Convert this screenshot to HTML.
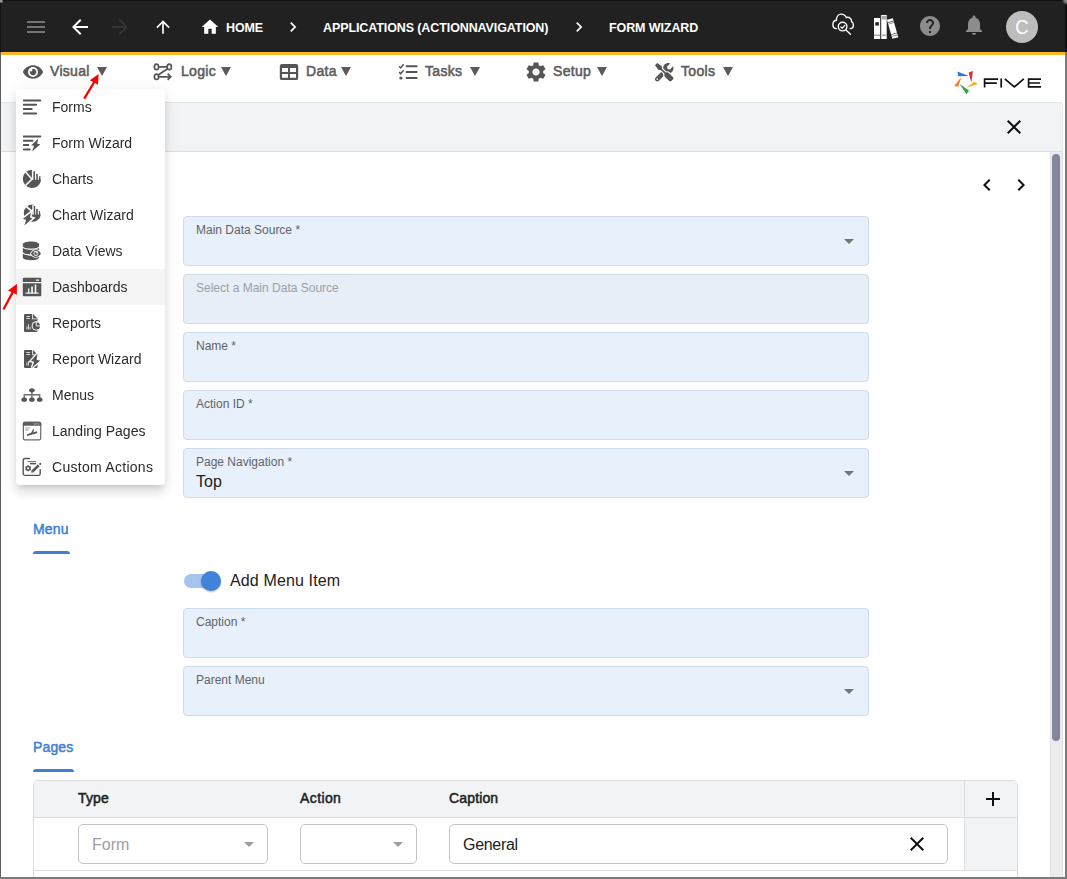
<!DOCTYPE html>
<html>
<head>
<meta charset="utf-8">
<title>Five - Form Wizard</title>
<style>
*{box-sizing:border-box;margin:0;padding:0}
html,body{width:1067px;height:879px;overflow:hidden;background:#fff;font-family:"Liberation Sans",sans-serif;}
#root{position:relative;width:1067px;height:879px;overflow:hidden;background:#fff}
.abs{position:absolute}
svg{display:block;position:absolute;overflow:visible}
.t{position:absolute;white-space:nowrap;line-height:1}
/* top bar */
#topbar{position:absolute;left:0;top:0;width:1067px;height:52px;background:#212121}
#ystripe{position:absolute;left:0;top:52px;width:1067px;height:3px;background:#f9b824}
.crumb{color:#fff;font-weight:bold;font-size:12.5px;top:22px;letter-spacing:-0.1px}
/* menubar */
.mi{color:#5c5c5c;font-size:14px;top:64px;letter-spacing:.3px;-webkit-text-stroke:.55px #5c5c5c}
.tri{position:absolute;width:0;height:0;border-left:5px solid transparent;border-right:5px solid transparent;border-top:9px solid #5a5a5a;top:67px}
/* content */
#chead{position:absolute;left:1px;top:102px;width:1062px;height:50px;background:#f2f3f5;border-top:1px solid #e3e4e6;border-bottom:1px solid #dcdddf;border-right:1px solid #e3e4e6;border-top-right-radius:4px}
.fld{position:absolute;left:183px;width:686px;height:50px;background:#e8f1fb;border:1px solid #ccdcec;border-radius:4px}
.fld.dis{background:#e7eef6;border-color:#cfdcea}
.lbl{position:absolute;left:12px;top:6px;font-size:12px;color:#5f6368;white-space:nowrap;line-height:14px}
.dis .lbl{color:#9aa0a6}
.val{position:absolute;left:12px;top:24px;font-size:16px;color:#212121;line-height:18px}
.dd{position:absolute;width:0;height:0;border-left:5px solid transparent;border-right:5px solid transparent;border-top:5px solid #757575}
.tab{color:#3f7fd6;font-size:14px;-webkit-text-stroke:.5px #3f7fd6;letter-spacing:.15px}
.ul{position:absolute;height:3px;background:#3f7fd6;border-radius:3px 3px 0 0}
/* dropdown */
#menu{position:absolute;left:16px;top:89px;width:149px;height:396px;background:#fff;border-radius:4px;box-shadow:0 5px 5px -3px rgba(0,0,0,.10),0 8px 10px 1px rgba(0,0,0,.08),0 3px 14px 2px rgba(0,0,0,.07);will-change:transform}
.it{position:absolute;left:0;width:149px;height:36px}
.it span{position:absolute;left:36px;top:10px;font-size:14px;color:#2b2b2b;white-space:nowrap;line-height:16px}
.it.hl{background:#f5f5f5}
.th{font-size:14px;color:#212121;top:791px;letter-spacing:.15px;-webkit-text-stroke:.5px #212121}
.inp{position:absolute;top:824px;height:40px;border:1px solid #c4c4c4;border-radius:5px;background:#fff}
</style>
</head>
<body>
<div id="root">

<!-- TOP BAR -->
<div id="topbar">
<svg style="left:24px;top:15px" width="24" height="24" viewBox="0 0 24 24"><path fill="#757575" d="M3 18h18v-2H3v2zm0-5h18v-2H3v2zm0-7v2h18V6H3z"/></svg>
<svg style="left:68px;top:15px" width="24" height="24" viewBox="0 0 24 24"><path fill="#fff" d="M20 11H7.83l5.59-5.59L12 4l-8 8 8 8 1.41-1.41L7.83 13H20v-2z"/></svg>
<svg style="left:108px;top:15px" width="24" height="24" viewBox="0 0 24 24"><path fill="#343434" d="M12 4l-1.41 1.41L16.17 11H4v2h12.17l-5.58 5.59L12 20l8-8z"/></svg>
<svg style="left:153px;top:17px" width="20" height="20" viewBox="0 0 24 24"><path fill="#fff" d="M4 12l1.41 1.41L11 7.830V20h2V7.830l5.580 5.590L20 12l-8-8-8 8z"/></svg>
<svg style="left:200px;top:17px" width="20" height="20" viewBox="0 0 24 24"><path fill="#fff" d="M10 20v-6h4v6h5v-8h3L12 3 2 12h3v8z"/></svg>
<div class="t crumb" style="left:226px">HOME</div>
<svg style="left:283px;top:17px" width="20" height="20" viewBox="0 0 24 24"><path fill="#fff" d="M10 6L8.590 7.410 13.170 12l-4.580 4.590L10 18l6-6z"/></svg>
<div class="t crumb" style="left:323px">APPLICATIONS (ACTIONNAVIGATION)</div>
<svg style="left:569.300px;top:17px" width="20" height="20" viewBox="0 0 24 24"><path fill="#fff" d="M10 6L8.590 7.410 13.170 12l-4.580 4.590L10 18l6-6z"/></svg>
<div class="t crumb" style="left:609px">FORM WIZARD</div>
<!-- right icons -->
<svg id="cloud" style="left:831px;top:12px" width="24" height="24" viewBox="0 0 24 24"><g fill="none" stroke="#fff" stroke-width="1.400" stroke-linecap="round"><path d="M5.400 16.600C3.200 16.400 1.900 14.600 1.900 12.400C1.900 10.200 3.400 8.600 5.400 8.300C5.400 4.800 7.400 2.100 10.200 2.100C12.600 2.100 14.400 3.400 15.300 5.500C18.200 4.700 20.800 6.800 20.600 9.600C21.800 10.300 22.400 11.700 22.400 13C22.400 15.200 20.800 16.600 19 16.600"/>
<circle cx="11.600" cy="14.600" r="5.600" fill="#212121" stroke="none"/><circle cx="11.600" cy="14.600" r="4.300"/><path d="M15 18L19.400 22.200"/><path stroke-width="1.200" d="M9.800 14.900L11.200 16.300L13.800 13.400"/></g></svg>
<svg id="books" style="left:872px;top:14px" width="27" height="26" viewBox="0 0 27 26"><path fill="#fff" d="M2 3.900H8.100V25.100H2ZM8.950 0.900H14.700V25.100H8.950Z"/>
<path fill="#212121" d="M3.300 8.200H6.850V11.600H3.300Z"/>
<path fill="#aaa" d="M2 20.600H8.100V22.100H2ZM8.950 20.600H14.700V22.100H8.950ZM9.900 2.100H14.700V5.600H9.900Z"/><path fill="#ccc" d="M8.950 0.900H9.900V25.100H8.950Z"/>
<g transform="rotate(-16 20.600 14.500)"><path fill="#fff" d="M17.500 4.600H23.700V24.400H17.500Z"/><path fill="#555" d="M17.500 7.100H23.700V8H17.500ZM17.500 8.900H23.700V9.500H17.500ZM17.500 19.600H23.700V20.400H17.500ZM17.500 21.600H23.700V22.300H17.500Z"/></g></svg>
<svg style="left:918px;top:13.500px" width="24" height="24" viewBox="0 0 24 24"><path fill="#8c8c8c" d="M12 2C6.480 2 2 6.480 2 12s4.480 10 10 10 10-4.480 10-10S17.520 2 12 2zm1 17h-2v-2h2v2zm2.070-7.750l-.9.920C13.450 12.900 13 13.500 13 15h-2v-.5c0-1.100.450-2.100 1.170-2.830l1.240-1.260c.370-.360.590-.860.590-1.410 0-1.100-.9-2-2-2s-2 .9-2 2H8c0-2.210 1.790-4 4-4s4 1.790 4 4c0 .880-.360 1.680-.930 2.250z"/></svg>
<svg style="left:962px;top:13px" width="24" height="24" viewBox="0 0 24 24"><path fill="#8c8c8c" d="M12 22c1.100 0 2-.9 2-2h-4c0 1.100.890 2 2 2zm6-6v-5c0-3.070-1.640-5.640-4.500-6.320V4c0-.830-.670-1.500-1.500-1.500s-1.500.670-1.500 1.500v.680C7.630 5.360 6 7.920 6 11v5l-2 2v1h16v-1l-2-2z"/></svg>
<div class="abs" style="left:1006px;top:11px;width:32px;height:32px;border-radius:50%;background:#bdbdbd"></div>
<div class="t" style="left:1006px;top:17px;width:32px;text-align:center;font-size:20px;color:#fff;transform:scaleX(.92)">C</div>
</div>
<div id="ystripe"></div>

<!-- MENU BAR -->
<div id="menubar">
<svg id="i-eye" style="left:23px;top:62px" width="20" height="20" viewBox="0 0 576 512"><path fill="#555" d="M572.52 241.400C518.290 135.590 410.930 64 288 64S57.680 135.640 3.480 241.410a32.350 32.350 0 0 0 0 29.190C57.710 376.410 165.070 448 288 448s230.320-71.640 284.520-177.410a32.350 32.350 0 0 0 0-29.190zM288 400a144 144 0 1 1 144-144 143.930 143.930 0 0 1-144 144zm0-240a95.310 95.310 0 0 0-25.310 3.790 47.850 47.850 0 0 1-66.900 66.900A95.780 95.780 0 1 0 288 160z"/></svg>
<div class="t mi" style="left:50px">Visual</div><div class="tri" style="left:97px"></div>
<svg id="i-logic" style="left:152px;top:59px" width="24" height="24" viewBox="0 0 24 24"><g fill="none" stroke="#555" stroke-width="1.700"><ellipse cx="4.500" cy="7.900" rx="2.100" ry="2.700"/><ellipse cx="17.300" cy="7.900" rx="2.100" ry="2.700"/><ellipse cx="4.500" cy="17.800" rx="2.100" ry="2.700"/>
<path d="M6.600 7.900H15.200M15.600 9.700L6.200 16M6.600 17.800H18.600M15.600 14.700L18.800 17.800L15.600 20.900"/></g></svg>
<div class="t mi" style="left:181px">Logic</div><div class="tri" style="left:221px"></div>
<svg id="i-data" style="left:277px;top:59px" width="24" height="24" viewBox="0 0 24 24"><rect x="2.800" y="4.900" width="18.400" height="16.200" rx="2.200" fill="#555"/><path fill="#fff" d="M5 8.900H11V12.900H5ZM13 8.900H19V12.900H13ZM5 14.900H11V18.800H5ZM13 14.900H19V18.800H13Z"/></svg>
<div class="t mi" style="left:306px">Data</div><div class="tri" style="left:341px"></div>
<svg id="i-tasks" style="left:397px;top:59px" width="24" height="24" viewBox="0 0 24 24"><g fill="none" stroke="#555"><path stroke-width="2" d="M8.800 7.200H20.400M8.800 13.100H20.400M8.800 19H20.400"/>
<path stroke-width="1.500" d="M2.100 7.200L3.600 8.900L6.700 5.300M2.100 13.100L3.600 14.800L6.700 11.200"/></g><circle cx="3.900" cy="19" r="1.600" fill="#555"/></svg>
<div class="t mi" style="left:425px">Tasks</div><div class="tri" style="left:470px"></div>
<svg id="i-setup" style="left:524px;top:60px" width="24" height="24" viewBox="0 0 24 24"><path fill="#555" d="M19.140 12.940c.040-.3.060-.610.060-.940 0-.320-.020-.640-.070-.940l2.030-1.580c.180-.140.230-.410.120-.610l-1.920-3.320c-.120-.220-.370-.290-.590-.220l-2.390.960c-.5-.380-1.030-.7-1.620-.940l-.360-2.540c-.040-.240-.240-.410-.480-.410h-3.840c-.240 0-.430.170-.470.410l-.360 2.540c-.590.240-1.130.570-1.620.940l-2.390-.960c-.220-.080-.470 0-.590.220L2.740 8.870c-.120.210-.080.470.12.610l2.030 1.580c-.050.3-.090.630-.090.940s.020.640.070.940l-2.030 1.580c-.180.140-.230.410-.120.610l1.920 3.320c.120.220.370.290.590.220l2.390-.960c.5.380 1.030.7 1.620.940l.360 2.540c.050.240.240.410.480.410h3.840c.240 0 .440-.170.470-.410l.360-2.540c.590-.240 1.130-.560 1.620-.940l2.390.960c.220.080.470 0 .590-.220l1.920-3.320c.120-.220.070-.470-.12-.610l-2.010-1.580zM12 15.600c-1.980 0-3.600-1.620-3.600-3.600s1.620-3.600 3.600-3.600 3.600 1.620 3.600 3.600-1.620 3.600-3.600 3.600z"/></svg>
<div class="t mi" style="left:553px">Setup</div><div class="tri" style="left:597px"></div>
<svg id="i-tools" style="left:654.800px;top:62.600px" width="18.500" height="18.500" viewBox="0 0 512 512"><path fill="#555" d="M501.100 395.700L384 278.600c-23.100-23.100-57.600-27.600-85.400-13.900L192 158.100V96L64 0 0 64l96 128h62.100l106.600 106.600c-13.600 27.800-9.200 62.300 13.900 85.400l117.100 117.100c14.600 14.600 38.200 14.600 52.700 0l52.700-52.700c14.500-14.600 14.500-38.200 0-52.700zM331.700 225c28.300 0 54.900 11 74.900 31l19.400 19.400c15.800-6.900 30.800-16.500 43.800-29.500 37.100-37.100 49.700-89.300 37.900-136.700-2.200-9-13.500-12.100-20.100-5.500l-74.400 74.400-67.900-11.300L334 98.900l74.400-74.400c6.600-6.600 3.400-17.900-5.700-20.200-47.400-11.700-99.600.9-136.600 37.900-28.500 28.500-41.900 66.100-41.200 103.600l82.100 82.100c8.100-1.900 16.500-2.900 24.700-2.900zm-103.900 82l-56.700-56.700L18.700 402.800c-25 25-25 65.500 0 90.500s65.500 25 90.500 0l123.600-123.600c-7.600-19.900-9.900-41.600-5-62.700zM64 472c-13.200 0-24-10.800-24-24 0-13.300 10.700-24 24-24s24 10.700 24 24c0 13.200-10.700 24-24 24z"/></svg>
<div class="t mi" style="left:681px">Tools</div><div class="tri" style="left:723px"></div>
<svg id="logo" style="left:945px;top:62px" width="105" height="40" viewBox="0 0 105 40">
<polygon fill="#2f76d6" points="12.400,9.600 23.800,14 13.200,14.200"/>
<polygon fill="#d9303b" points="23.600,10.400 28,9 26.300,20.400"/>
<polygon fill="#f9b320" points="33,22 29.400,19.800 21.300,25.800"/>
<polygon fill="#35a24b" points="14.600,22 24,28.600 21.500,32.200"/>
<polygon fill="#f8802a" points="16.300,15 13.300,24.700 9,24"/>
<g fill="none" stroke="#111" stroke-width="1.700">
<path d="M53.200,17.200H39.600V25.600M39.600,21.200H51.800"/>
<path d="M56.200,16.500V25.600"/>
<path d="M59.800,16.800L69.300,25L78.800,16.800"/>
<path d="M96,17.200H83.600V24.800H96M83.600,21H95"/>
</g>
</svg>
</div>

<!-- CONTENT HEADER -->
<div id="chead"></div>
<svg style="left:1002px;top:115px" width="24" height="24" viewBox="0 0 24 24"><path fill="#111" d="M19 6.410L17.590 5 12 10.590 6.410 5 5 6.410 10.590 12 5 17.590 6.410 19 12 13.410 17.590 19 19 17.590 13.410 12z"/></svg>

<!-- SCROLL AREA -->
<div id="scroll">
<div class="abs" style="left:1050px;top:152px;width:13px;height:725px;background:#ececec;border-left:1px solid #e2e2e2;border-right:1px solid #e2e2e2"></div>
<div class="abs" style="left:1052px;top:154px;width:8px;height:587px;background:#82879a;border-radius:4px"></div>
<svg style="left:975px;top:173px" width="24" height="24" viewBox="0 0 24 24"><path fill="#111" d="M15.410 7.410L14 6l-6 6 6 6 1.410-1.410L10.830 12z"/></svg>
<svg style="left:1009px;top:173px" width="24" height="24" viewBox="0 0 24 24"><path fill="#111" d="M10 6L8.590 7.410 13.170 12l-4.580 4.590L10 18l6-6z"/></svg>
<div class="fld" style="top:216px"><div class="lbl">Main Data Source *</div><div class="dd" style="left:660px;top:22px"></div></div>
<div class="fld dis" style="top:274px"><div class="lbl">Select a Main Data Source</div></div>
<div class="fld" style="top:332px"><div class="lbl">Name *</div></div>
<div class="fld" style="top:390px"><div class="lbl">Action ID *</div></div>
<div class="fld" style="top:448px"><div class="lbl">Page Navigation *</div><div class="val">Top</div><div class="dd" style="left:660px;top:22px"></div></div>
<div class="t tab" style="left:33px;top:522px">Menu</div><div class="ul" style="left:33px;top:551px;width:37px"></div>
<div class="abs" style="left:184px;top:574px;width:34px;height:14px;border-radius:7px;background:#a5c4ee"></div>
<div class="abs" style="left:201px;top:571px;width:20px;height:20px;border-radius:50%;background:#4183d8;box-shadow:0 1px 2px rgba(0,0,0,.3)"></div>
<div class="t" style="left:230px;top:573px;font-size:16px;color:#212121;letter-spacing:.13px">Add Menu Item</div>
<div class="fld" style="top:608px"><div class="lbl">Caption *</div></div>
<div class="fld" style="top:666px"><div class="lbl">Parent Menu</div><div class="dd" style="left:660px;top:22px"></div></div>
<div class="t tab" style="left:33px;top:740px">Pages</div><div class="ul" style="left:33px;top:769px;width:41px"></div>
<div class="abs" style="left:33px;top:780px;width:985px;height:110px;border:1px solid #dcdddf;border-radius:5px 5px 0 0;background:#fff"></div>
<div class="abs" style="left:34px;top:781px;width:983px;height:36px;background:#f2f3f5;border-radius:4px 4px 0 0"></div>
<div class="abs" style="left:34px;top:817px;width:983px;height:1px;background:#dcdddf"></div>
<div class="abs" style="left:34px;top:870px;width:983px;height:1px;background:#dcdddf"></div>
<div class="abs" style="left:964px;top:781px;width:53px;height:89px;background:#f2f3f5;border-left:1px solid #dcdddf"></div>
<div class="abs" style="left:964px;top:817px;width:53px;height:1px;background:#dcdddf"></div>
<div class="abs" style="left:964px;top:870px;width:53px;height:1px;background:#dcdddf"></div>
<div class="t th" style="left:78px">Type</div><div class="t th" style="left:300px;letter-spacing:.4px">Action</div><div class="t th" style="left:449px">Caption</div>
<svg style="left:981px;top:787px" width="24" height="24" viewBox="0 0 24 24"><path fill="#111" d="M19 13h-6v6h-2v-6H5v-2h6V5h2v6h6v2z"/></svg>
<div class="inp" style="left:78px;width:190px"><div class="t" style="left:13px;top:12px;font-size:16px;color:#9e9e9e">Form</div><div class="dd" style="left:165px;top:17px;border-top-color:#9e9e9e"></div></div>
<div class="inp" style="left:300px;width:117px"><div class="dd" style="left:92px;top:17px;border-top-color:#9e9e9e"></div></div>
<div class="inp" style="left:449px;width:499px"><div class="t" style="left:13px;top:12px;font-size:16px;color:#212121;letter-spacing:-.3px">General</div><svg style="left:455px;top:7px" width="24" height="24" viewBox="0 0 24 24"><path fill="#111" d="M19 6.410L17.590 5 12 10.590 6.410 5 5 6.410 10.590 12 5 17.590 6.410 19 12 13.410 17.590 19 19 17.590 13.410 12z"/></svg></div>
</div>

<!-- DROPDOWN -->
<div id="menu">
<div class="it" style="top:0px"><svg id="mi0" style="left:5px;top:6px" width="24" height="24" viewBox="0 0 24 24"><g stroke="#555" stroke-width="2" stroke-linecap="round"><path d="M2.8 5.400H19.300M2.800 9.700H15.100M2.800 14H10.700M2.800 18.400H15.100"/></g></svg><span>Forms</span></div>
<div class="it" style="top:36px"><svg id="mi1" style="left:5px;top:6px" width="24" height="24" viewBox="0 0 24 24"><g stroke="#555" stroke-width="2" stroke-linecap="round"><path d="M2.800 5.400H19.300M2.800 9.800H11.500M2.800 14.100H7.300M2.800 18.400H8.700"/></g><polygon fill="#555" stroke="#fff" stroke-width="1" paint-order="stroke" points="17.300,7.400 10.200,14.300 13,14.800 11.100,20.600 19.400,13.300 16.200,12.800"/></svg><span>Form Wizard</span></div>
<div class="it" style="top:72px"><svg id="mi2" style="left:5px;top:6px" width="24" height="24" viewBox="0 0 24 24"><path fill="#555" d="M10.950 11.850V2.650A9.200 9.200 0 1 0 20.150 12.850H10.950Z"/>
<path stroke="#fff" stroke-width="1.500" fill="none" d="M10.950 12.200L4.300 4.600M11.200 12L4.600 18.400"/>
<path fill="#fff" d="M10.950 2H12.300V12.600H10.950Z"/>
<path fill="#555" d="M12.400 4.200H14V13H12.400ZM15.200 7H16.800V13H15.200ZM17.900 9.200H19.500V13H17.900Z"/></svg><span>Charts</span></div>
<div class="it" style="top:108px"><svg id="mi3" style="left:5px;top:6px" width="24" height="24" viewBox="0 0 24 24"><path fill="#555" d="M11.300 10.200V1.600A8.600 8.600 0 1 0 19.900 11.400H11.300Z"/>
<path stroke="#fff" stroke-width="1.700" fill="none" d="M12.300 9.700L4.800 3"/>
<path fill="#d0d0d0" d="M11.300 1H12.900V11.400H11.300Z"/>
<path fill="#555" d="M12.900 3.100H14.200V12H12.900ZM15.100 5.900H16.800V12H15.100ZM17.900 7.900H19.100V12H17.900Z"/>
<polygon fill="#555" stroke="#fff" stroke-width="3" paint-order="stroke" stroke-linejoin="miter" points="10,9.400 1.900,15.900 5.200,16.700 3.400,22.500 11.600,15.200 8.900,14.500"/></svg><span>Chart Wizard</span></div>
<div class="it" style="top:144px"><svg id="mi4" style="left:5px;top:6px" width="24" height="24" viewBox="0 0 24 24"><path fill="#555" transform="translate(1.800 2.600) scale(.0364 .0365)" d="M448 73.143v45.714C448 159.143 347.667 192 224 192S0 159.143 0 118.857V73.143C0 32.857 100.333 0 224 0s224 32.857 224 73.143zM448 176v102.857C448 319.143 347.667 352 224 352S0 319.143 0 278.857V176c48.125 33.143 136.208 48.572 224 48.572S399.874 209.143 448 176zm0 160v102.857C448 479.143 347.667 512 224 512S0 479.143 0 438.857V336c48.125 33.143 136.208 48.572 224 48.572S399.874 369.143 448 336z"/>
<path fill="#555" stroke="#fff" stroke-width="1.600" paint-order="stroke" d="M9.900 14.500C11.100 12.300 12.900 11.100 14.900 11.100S18.700 12.300 19.900 14.500C18.700 16.700 16.900 17.900 14.900 17.900S11.100 16.700 9.900 14.500Z"/>
<circle cx="14.900" cy="14.500" r="2.400" fill="#fff"/><circle cx="14.900" cy="14.500" r="1.600" fill="#555"/><circle cx="15.500" cy="13.800" r=".6" fill="#fff"/></svg><span>Data Views</span></div>
<div class="it hl" style="top:180px"><svg id="mi5" style="left:5px;top:6px" width="24" height="24" viewBox="0 0 24 24"><path fill="#555" d="M2.800 2.800H19.300A1 1 0 0 1 20.300 3.800V6.900H1.800V3.800A1 1 0 0 1 2.800 2.800ZM1.800 8.300H20.300V20.200A1 1 0 0 1 19.300 21.200H2.800A1 1 0 0 1 1.800 20.200Z"/>
<path fill="#f5f5f5" d="M14.900 4.600H18.100V5.700H14.900ZM7 13.600H8.300V17.600H7ZM10.200 11.600H11.900V17.600H10.200ZM13.700 9.600H15.300V17.600H13.700ZM4.600 17.600H17.700V18.800H4.600Z"/></svg><span>Dashboards</span></div>
<div class="it" style="top:216px"><svg id="mi6" style="left:5px;top:6px" width="24" height="24" viewBox="0 0 24 24"><path fill="#555" d="M4.200 3H12.100L16.500 7.400V19.700A1.200 1.200 0 0 1 15.300 20.900H4.200A1.200 1.200 0 0 1 3 19.700V4.200A1.200 1.200 0 0 1 4.200 3Z"/>
<path fill="#fff" d="M12.100 3V7.400H16.500V8.300H11.200V3Z"/>
<path fill="#ddd" d="M5.400 4.900H8.900V5.900H5.400ZM5.400 6.900H8.900V7.900H5.400ZM5.400 15.400H6.400V18.500H5.400ZM7 13.300H8V18.500H7ZM8.600 16H9.600V18.500H8.600Z"/>
<circle cx="15.300" cy="14.900" r="4.700" fill="#fff"/><circle cx="15.300" cy="14.900" r="3.700" fill="#555"/>
<path stroke="#fff" stroke-width=".9" fill="none" d="M15.300 10.500V14.900H19.700"/></svg><span>Reports</span></div>
<div class="it" style="top:252px"><svg id="mi7" style="left:5px;top:6px" width="24" height="24" viewBox="0 0 24 24"><path fill="#555" d="M4.200 3H12.100L16.500 7.400V19.700A1.200 1.200 0 0 1 15.300 20.900H4.200A1.200 1.200 0 0 1 3 19.700V4.200A1.200 1.200 0 0 1 4.200 3Z"/>
<path fill="#fff" d="M12.100 3V7.400H16.500V8.300H11.200V3Z"/>
<path fill="#ddd" d="M5.400 4.900H8.900V5.900H5.400ZM5.400 6.900H8.900V7.900H5.400ZM5.400 15.400H6.400V18.500H5.400ZM7 14.300H8V18.500H7Z"/>
<polygon fill="#555" stroke="#fff" stroke-width="2.600" paint-order="stroke" points="16.500,6.400 9.900,14.100 13.200,14.700 11,20.800 19.100,13.500 15.600,12.900"/></svg><span>Report Wizard</span></div>
<div class="it" style="top:288px"><svg id="mi8" style="left:5px;top:6px" width="24" height="24" viewBox="0 0 24 24"><path fill="none" stroke="#707070" stroke-width="1.400" d="M10.900 7.300V16.700M3.200 16.700V11.700H18.700V16.700"/>
<g fill="#555"><ellipse cx="10.900" cy="7.300" rx="2.800" ry="2.100"/><ellipse cx="3.200" cy="16.700" rx="2.800" ry="2.100"/><ellipse cx="10.900" cy="16.700" rx="2.800" ry="2.100"/><ellipse cx="18.700" cy="16.700" rx="2.800" ry="2.100"/></g></svg><span>Menus</span></div>
<div class="it" style="top:324px"><svg id="mi9" style="left:5px;top:6px" width="24" height="24" viewBox="0 0 24 24"><rect x="2.400" y="3.400" width="17.300" height="17.500" rx="1.600" fill="#fff" stroke="#6a6a6a" stroke-width="1.200"/>
<path fill="#5e5e5e" d="M3.400 2.800H18.700A1.600 1.600 0 0 1 20.300 4.400V6.800H1.800V4.400A1.600 1.600 0 0 1 3.400 2.800Z"/>
<path fill="#999" d="M13 4.300H18.300V5.500H13Z"/>
<path fill="#bbb" d="M4.200 8.200H8.900V9.400H4.200ZM4.200 9.900H7.400V11.700H4.200Z"/>
<path fill="none" stroke="#555" stroke-linecap="round" stroke-width="1.900" d="M6.800 15.900L15.400 13.300"/><path fill="none" stroke="#555" stroke-linecap="round" stroke-width="1.500" d="M10.600 14.600L12.400 11"/></svg><span>Landing Pages</span></div>
<div class="it" style="top:360px"><svg id="mi10" style="left:5px;top:6px" width="24" height="24" viewBox="0 0 24 24"><path fill="none" stroke="#555" stroke-width="1.400" stroke-linecap="round" d="M8.400 3.500H4A1.800 1.800 0 0 0 2.200 5.300V18.600A1.800 1.800 0 0 0 4 20.400H17.400A1.800 1.800 0 0 0 19.200 18.600V14.600"/>
<path stroke="#555" stroke-width=".8" d="M6.600 6.500H15.100"/><path stroke="#555" stroke-width="1.600" d="M9 8.600H15.100"/>
<circle cx="7.150" cy="13.300" r="1.900" fill="none" stroke="#555" stroke-width="1.500"/>
<g stroke="#555" stroke-width="1.300"><path d="M7.150 10.300V16.300M4.550 11.800L9.750 14.800M4.550 14.800L9.750 11.800"/></g><circle cx="7.150" cy="13.300" r="1.100" fill="#fff"/>
<path stroke="#555" stroke-width="2.700" d="M11.400 16.500L17.700 10.400"/><polygon fill="#555" points="10.200,17.700 10.500,15.600 12.300,17.400"/>
<path stroke="#555" stroke-width="1.100" d="M18.200 8.900L20.200 8.900M19.200 7.900V9.900M18.500 8.200L19.900 9.600M18.500 9.600L19.900 8.200"/></svg><span style="letter-spacing:.28px">Custom Actions</span></div>
</div>

<svg style="left:0;top:0" width="1067" height="879" viewBox="0 0 1067 879"><g fill="#ff0000" stroke="none">
<path d="M83.200 98.100L85.200 99.300L95 82.900L97.900 84.700L98.700 74.100L89.900 80.200L93 81.900Z"/>
<path d="M2.400 309L4.400 310L13.600 292.900L16.800 294.700L17 283.900L8 290.400L11.500 292Z"/>
</g></svg>
<!-- window frame -->
<div class="abs" style="left:0;top:0;width:1067px;height:1px;background:#111"></div>
<div class="abs" style="left:0;top:52px;width:1px;height:827px;background:#5f5f5f"></div><div class="abs" style="left:0;top:0;width:1px;height:52px;background:#111"></div><div class="abs" style="left:0;top:0;width:3px;height:3px;background:radial-gradient(circle at 1px 1px,#ccc 0,#777 1.2px,#222 2.5px)"></div>
<div class="abs" style="left:1065px;top:52px;width:2px;height:827px;background:#7a7a7a"></div>
<div class="abs" style="left:1065px;top:0;width:2px;height:52px;background:#111"></div>
<div class="abs" style="left:0;top:877px;width:1067px;height:2px;background:#7a7a7a"></div>
<div class="abs" style="left:1062px;top:0;width:5px;height:6px;background:radial-gradient(circle at 5px 0,#8a8a8a 0,#808080 2.500px,rgba(17,17,17,0) 5px)"></div>
</div>
</body>
</html>
